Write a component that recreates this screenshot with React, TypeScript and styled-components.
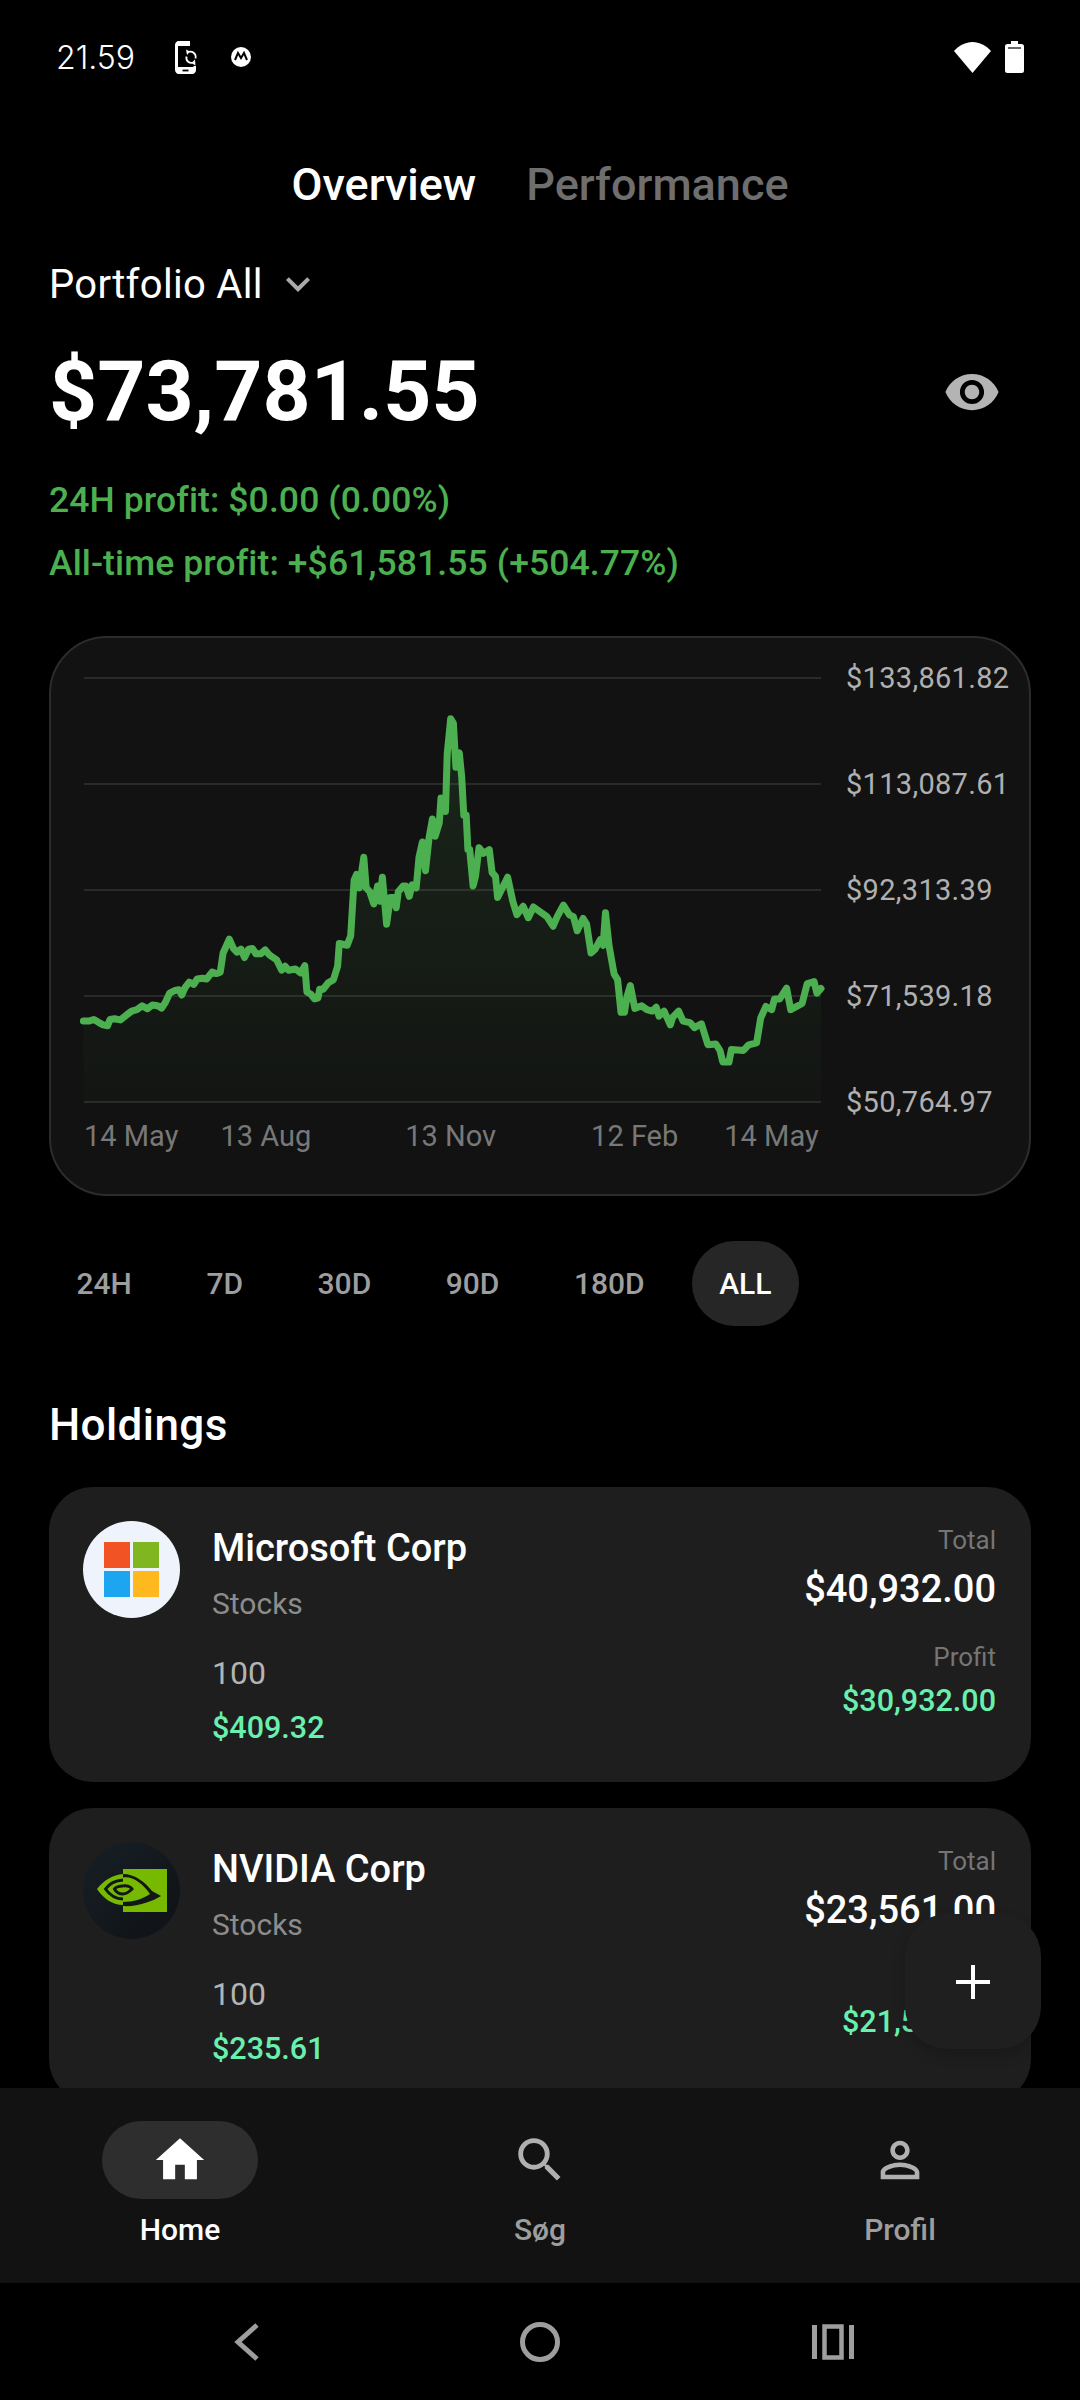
import styled, { createGlobalStyle } from "styled-components";
import {
  MdHome,
  MdKeyboardArrowDown,
  MdOutlinePersonOutline,
  MdSearch,
  MdVisibility,
} from "react-icons/md";

const GlobalStyle = createGlobalStyle`
  html, body {
    margin: 0;
    padding: 0;
    background: #000;
  }
  body {
    font-family: Roboto, "Noto Sans", sans-serif;
    color: #fff;
  }
`;

// line of the chart, traced from the screen: [x, y] in plot pixels
const LINE_LEFT =
  "155,1048 170,1048 185,1044 200,1052 212,1058 225,1060 232,1044 245,1042 262,1045 280,1032 295,1022 310,1018 325,1008 340,1016 355,1006 370,1008 382,1014 392,1000 405,975 420,968 432,966 440,980 450,960 462,946 475,952 485,938 500,936 512,938 528,920 540,924 552,920 560,870 570,850 578,834 590,858 600,868 612,860 622,882 634,860 645,858 655,872 670,872 682,862 695,876 715,888 730,915 740,905 750,915 770,912 785,922 797,903 803,972 815,978 825,990 835,988 840,965 850,965 865,948 880,940 892,905 897,845 910,848 920,850 930,825 940,680 947,665 955,700 968,620 975,700 985,710 997,742 1008,695 1015,735 1022,672 1034,795 1045,725 1055,725 1062,752 1068,710 1082,695 1090,695 1100,722 1108,692 1120,700 1128,620 1138,580 1147,655 1157,570 1167,520 1175,565 1187,530 1192,465 1205,500 1210,350 1220,258 1228,270 1235,385 1245,347 1252,410 1258,510 1265,510 1270,600 1275,600 1285,695 1292,670 1302,595 1315,610 1332,600 1340,660 1350,670 1356,725 1385,672 1400,735 1412,770 1430,748 1445,778 1460,750";
const LINE_RIGHT =
  "20,775 38,800 50,775 68,745 85,770 97,775 108,812 125,780 135,795 148,870 160,860 175,835 183,850 190,765 200,850 215,925 225,940 235,1025 245,1025 252,985 262,955 275,1015 295,1008 310,1018 325,1022 337,1012 345,1035 360,1022 378,1058 385,1038 402,1022 415,1048 435,1052 448,1065 468,1055 487,1110 510,1108 522,1125 530,1155 548,1155 555,1122 590,1125 605,1110 628,1105 640,1040 655,1010 672,1018 680,990 695,990 715,962 727,1018 760,1002 775,950 795,945 803,975 815,963";

const PLOT_W = 737;
const PLOT_H = 424;

const trace = (raw: string, originX: number) =>
  raw.split(" ").map((pair) => {
    const [x, y] = pair.split(",").map(Number);
    return `${(x / 2.9 + originX - 84).toFixed(1)},${(y / 2.613 + 620 - 678).toFixed(1)}`;
  });

const linePoints = [...trace(LINE_LEFT, 30), ...trace(LINE_RIGHT, 540)];
const areaPoints = [`0,${PLOT_H}`, ...linePoints, `${PLOT_W},${PLOT_H}`].join(" ");

const Page = styled.div`
  position: relative;
  width: 1080px;
  height: 2400px;
  background: #000;
  display: flex;
  flex-direction: column;
  overflow: hidden;
`;

// 상태바
const StatusBar = styled.div`
  height: 114px;
  flex: none;
  display: flex;
  align-items: center;
  padding: 0 56px;
`;

const StatusTime = styled.span`
  font-family: Inter, sans-serif;
  font-weight: 300;
  font-size: 32px;
  width: 119px;
`;

const StatusRight = styled.div`
  margin-left: auto;
  display: flex;
  align-items: center;
  gap: 14px;
`;

const Moto = styled.svg`
  margin-left: 33px;
`;

const Tabs = styled.div`
  flex: none;
  height: 60px;
  margin-top: 40px;
  display: flex;
  justify-content: center;
  align-items: center;
  gap: 50px;
`;

const Tab = styled.span<{ $active?: boolean }>`
  font-size: 45px;
  font-weight: 500;
  color: ${(p) => (p.$active ? "#fff" : "#6e6e6e")};
`;

const Content = styled.div`
  flex: 1;
  min-height: 0;
  overflow: hidden;
  padding: 0 49px;
`;

const PortfolioRow = styled.div`
  height: 50px;
  margin-top: 45px;
  display: flex;
  align-items: center;
  gap: 11px;
  font-size: 40px;
  letter-spacing: 0.3px;
  color: #fff;
  svg {
    color: #aaa;
  }
`;

const BalanceRow = styled.div`
  height: 94px;
  margin-top: 36px;
  display: flex;
  justify-content: space-between;
  align-items: center;
  padding-right: 30px;
  svg {
    color: #b4b4b4;
  }
`;

const Balance = styled.span`
  font-size: 84px;
  font-weight: 700;
  line-height: 94px;
`;

const ProfitList = styled.div`
  margin-top: 41px;
  display: flex;
  flex-direction: column;
  gap: 23px;
`;

const ProfitLine = styled.div`
  font-size: 35.5px;
  font-weight: 500;
  line-height: 40px;
  letter-spacing: 0.1px;
  color: #4caf50;
`;

// 차트 카드
const ChartCard = styled.div`
  margin-top: 53px;
  height: 560px;
  box-sizing: border-box;
  background: #121212;
  border: 2px solid #2c2c2c;
  border-radius: 58px;
  padding: 24px 0 0 33px;
  display: grid;
  grid-template-columns: ${PLOT_W}px auto;
  grid-template-rows: 456px auto;
  column-gap: 25px;
`;

const Plot = styled.svg`
  display: block;
  margin-top: 16px;
  overflow: visible;
`;

const YAxis = styled.div`
  display: flex;
  flex-direction: column;
  justify-content: space-between;
`;

const YLabel = styled.span`
  font-size: 29px;
  line-height: 32px;
  color: #b0b0b0;
  letter-spacing: 0.3px;
`;

const XAxis = styled.div`
  display: flex;
  margin-top: 2px;
`;

const XLabel = styled.span<{ $gap: number }>`
  font-size: 29px;
  line-height: 32px;
  white-space: nowrap;
  color: #787878;
  margin-left: ${(p) => p.$gap}px;
`;

const RangeRow = styled.div`
  margin-top: 45px;
  display: flex;
  gap: 19.5px;
`;

const RangePill = styled.div<{ $active?: boolean }>`
  height: 85px;
  padding: 0 27.5px;
  border-radius: 43px;
  display: flex;
  align-items: center;
  font-size: 30px;
  font-weight: 500;
  color: ${(p) => (p.$active ? "#fff" : "#9e9e9e")};
  background: ${(p) => (p.$active ? "#262626" : "transparent")};
`;

const SectionTitle = styled.h2`
  margin: 74px 0 37px;
  font-size: 44px;
  font-weight: 500;
  line-height: 50px;
  letter-spacing: 0.4px;
`;

const HoldingList = styled.div`
  display: flex;
  flex-direction: column;
  gap: 26px;
`;

const HoldingCard = styled.div`
  flex: none;
  height: 295px;
  box-sizing: border-box;
  background: #1e1e1e;
  border-radius: 44px;
  padding: 34px 35px 0 34px;
  display: flex;
`;

const LogoCircle = styled.div<{ $bg: string }>`
  flex: none;
  width: 97px;
  height: 97px;
  border-radius: 50%;
  background: ${(p) => p.$bg};
  display: flex;
  align-items: center;
  justify-content: center;
  margin-right: 32px;
`;

const MsGrid = styled.div`
  display: grid;
  grid-template-columns: 26px 26px;
  grid-auto-rows: 26px;
  gap: 3px;
`;

const MsSquare = styled.div<{ $color: string }>`
  background: ${(p) => p.$color};
`;

const HoldingLeft = styled.div`
  flex: 1;
  padding-top: 5px;
  display: flex;
  flex-direction: column;
`;

const HoldingName = styled.div`
  font-size: 38px;
  font-weight: 500;
  line-height: 44px;
`;

const HoldingType = styled.div`
  margin-top: 16px;
  font-size: 30px;
  line-height: 36px;
  color: #8c8c8c;
`;

const HoldingQty = styled.div`
  margin-top: 32px;
  font-size: 32px;
  line-height: 38px;
  color: #b4b4b4;
`;

const HoldingPrice = styled.div`
  margin-top: 18px;
  font-size: 30.5px;
  font-weight: 500;
  line-height: 36px;
  color: #69f0ae;
`;

const HoldingRight = styled.div`
  padding-top: 4px;
  display: flex;
  flex-direction: column;
  align-items: flex-end;
`;

const StatLabel = styled.div<{ $gap?: number }>`
  margin-top: ${(p) => p.$gap ?? 0}px;
  font-size: 26px;
  line-height: 30px;
  color: #757575;
`;

const StatTotal = styled.div`
  margin-top: 12px;
  font-size: 38px;
  font-weight: 500;
  line-height: 44px;
`;

const StatProfit = styled.div`
  margin-top: 11px;
  font-size: 30.5px;
  font-weight: 500;
  line-height: 36px;
  color: #69f0ae;
`;

const Fab = styled.div`
  position: absolute;
  left: 905px;
  top: 1914px;
  width: 136px;
  height: 135px;
  border-radius: 42px;
  background: #1f1f1f;
  box-shadow: 0 6px 14px rgba(0, 0, 0, 0.18);
  display: flex;
  align-items: center;
  justify-content: center;
`;

// 하단 내비게이션
const BottomNav = styled.nav`
  flex: none;
  height: 195px;
  background: #121212;
  display: grid;
  grid-template-columns: repeat(3, 360px);
`;

const NavItem = styled.div<{ $active?: boolean }>`
  display: flex;
  flex-direction: column;
  align-items: center;
  padding-top: 33px;
  color: ${(p) => (p.$active ? "#fff" : "#b0b0b0")};
`;

const NavIcon = styled.div<{ $active?: boolean }>`
  width: 156px;
  height: 78px;
  border-radius: 39px;
  display: flex;
  align-items: center;
  justify-content: center;
  background: ${(p) => (p.$active ? "#2e2e2e" : "transparent")};
`;

const NavLabel = styled.span<{ $active?: boolean }>`
  margin-top: 14px;
  font-size: 30px;
  font-weight: 500;
  line-height: 34px;
  color: ${(p) => (p.$active ? "#fff" : "#9e9e9e")};
`;

const SystemNav = styled.div`
  flex: none;
  height: 117px;
  padding: 0 101px;
  display: grid;
  grid-template-columns: repeat(3, 1fr);
  align-items: center;
  justify-items: center;
`;

const PhoneSyncIcon = () => (
  <svg width="23" height="33" viewBox="0 0 23 33" fill="none">
    <path
      d="M15 0H4.500A4 4 0 0 0 0 4V29A4 4 0 0 0 4.500 33H16.500A4 4 0 0 0 21 29V25H18.500V26H3V5H15Z"
      fill="#fff"
    />
    <path d="M7.500 29.500H13.500" stroke="#000" strokeWidth="1.800" />
    <path
      d="M13 11C17 9.500 21.500 12.500 20.500 17.500M18.500 21.500C14.500 23 10.500 20 11.500 15.500"
      stroke="#fff"
      strokeWidth="1.800"
    />
    <path d="M11 8.500L15 10.500L12 14Z M20.500 24.500L16.500 22L20 18.500Z" fill="#fff" />
  </svg>
);

const WifiIcon = () => (
  <svg width="37" height="31" viewBox="0 0 37 31">
    <path d="M18.500 31L0 9C5 3.500 11.500 0 18.500 0S32 3.500 37 9Z" fill="#fff" />
  </svg>
);

const BatteryIcon = () => (
  <svg width="19" height="32" viewBox="0 0 19 32">
    <path
      d="M6 0H13V3H16.500A2.500 2.500 0 0 1 19 5.500V29.500A2.500 2.500 0 0 1 16.500 32H2.500A2.500 2.500 0 0 1 0 29.500V5.500A2.500 2.500 0 0 1 2.500 3H6Z"
      fill="#fff"
    />
    <rect x="3" y="6" width="13" height="2" fill="#666" />
  </svg>
);

const MsLogo = () => (
  <LogoCircle $bg="#eff3fb">
    <MsGrid>
      <MsSquare $color="#f25325" />
      <MsSquare $color="#80b61f" />
      <MsSquare $color="#1ba6ef" />
      <MsSquare $color="#ffb91f" />
    </MsGrid>
  </LogoCircle>
);

const NvidiaLogo = () => (
  <LogoCircle $bg="linear-gradient(135deg, #172026, #0f1114)">
    <svg width="97" height="97" viewBox="0 0 97 97" fill="none">
      <rect x="40" y="27" width="44" height="43" fill="#76b900" />
      <path d="M14 47C21 38 30 33 40 32V63C29 63 20 56 14 47Z" fill="#76b900" />
      <g stroke="#12171a" strokeWidth="3">
        <path d="M40 38C32 38.500 26 42 22.500 47C26 52 32 57 40 57" />
        <path d="M40 44C36 44 33 45 31.500 47C33 50 36 52 40 52" />
        <path d="M40 44C44 43 48 45 49 47C46 50 43 52 40 52" />
      </g>
      <path d="M40 32C52 32 62 40 69 49L78 54C68 60 54 65 40 64V60C50 60 60 57 67 52C60 42 50 34 40 35.500Z" fill="#12171a" />
    </svg>
  </LogoCircle>
);

interface HoldingProps {
  name: string;
  price: string;
  total: string;
  profit: string;
  logo: React.ReactNode;
}

const Holding = ({ name, price, total, profit, logo }: HoldingProps) => (
  <HoldingCard>
    {logo}
    <HoldingLeft>
      <HoldingName>{name}</HoldingName>
      <HoldingType>Stocks</HoldingType>
      <HoldingQty>100</HoldingQty>
      <HoldingPrice>{price}</HoldingPrice>
    </HoldingLeft>
    <HoldingRight>
      <StatLabel>Total</StatLabel>
      <StatTotal>{total}</StatTotal>
      <StatLabel $gap={31}>Profit</StatLabel>
      <StatProfit>{profit}</StatProfit>
    </HoldingRight>
  </HoldingCard>
);

const Y_LABELS = ["$133,861.82", "$113,087.61", "$92,313.39", "$71,539.18", "$50,764.97"];
const X_LABELS: [string, number][] = [
  ["14 May", 0],
  ["13 Aug", 42],
  ["13 Nov", 94],
  ["12 Feb", 95],
  ["14 May", 46],
];
const RANGES = ["24H", "7D", "30D", "90D", "180D", "ALL"];

export default function App() {
  return (
    <>
      <GlobalStyle />
      <Page>
        <StatusBar>
          <StatusTime>21.59</StatusTime>
          <PhoneSyncIcon />
          <Moto width="20" height="20" viewBox="0 0 20 20">
            <circle cx="10" cy="10" r="10" fill="#fff" />
            <path d="M4 13L7 6L10 11L13 6L16 13" fill="none" stroke="#000" strokeWidth="2" />
          </Moto>
          <StatusRight>
            <WifiIcon />
            <BatteryIcon />
          </StatusRight>
        </StatusBar>

        <Tabs>
          <Tab $active>Overview</Tab>
          <Tab>Performance</Tab>
        </Tabs>

        <Content>
          <PortfolioRow>
            Portfolio All
            <MdKeyboardArrowDown size={48} />
          </PortfolioRow>
          <BalanceRow>
            <Balance>$73,781.55</Balance>
            <MdVisibility size={58} />
          </BalanceRow>
          <ProfitList>
            <ProfitLine>24H profit: $0.00 (0.00%)</ProfitLine>
            <ProfitLine>All-time profit: +$61,581.55 (+504.77%)</ProfitLine>
          </ProfitList>

          <ChartCard>
            <Plot width={PLOT_W} height={PLOT_H} viewBox={`0 0 ${PLOT_W} ${PLOT_H}`}>
              <defs>
                <linearGradient id="area" x1="0" y1="0" x2="0" y2="1">
                  <stop offset="0%" stopColor="#4caf50" stopOpacity="0.13" />
                  <stop offset="100%" stopColor="#4caf50" stopOpacity="0.02" />
                </linearGradient>
              </defs>
              {[0, 1, 2, 3, 4].map((i) => (
                <line
                  key={i}
                  x1="0"
                  x2={PLOT_W}
                  y1={(i * PLOT_H) / 4}
                  y2={(i * PLOT_H) / 4}
                  stroke="#2a2a2a"
                  strokeWidth="2"
                />
              ))}
              <polygon points={areaPoints} fill="url(#area)" />
              <polyline
                points={linePoints.join(" ")}
                fill="none"
                stroke="#4caf50"
                strokeWidth="7"
                strokeLinejoin="round"
                strokeLinecap="round"
              />
            </Plot>
            <YAxis>
              {Y_LABELS.map((label) => (
                <YLabel key={label}>{label}</YLabel>
              ))}
            </YAxis>
            <XAxis>
              {X_LABELS.map(([label, gap]) => (
                <XLabel key={label + gap} $gap={gap}>
                  {label}
                </XLabel>
              ))}
            </XAxis>
          </ChartCard>

          <RangeRow>
            {RANGES.map((range) => (
              <RangePill key={range} $active={range === "ALL"}>
                {range}
              </RangePill>
            ))}
          </RangeRow>

          <SectionTitle>Holdings</SectionTitle>
          <HoldingList>
            <Holding
              name="Microsoft Corp"
              price="$409.32"
              total="$40,932.00"
              profit="$30,932.00"
              logo={<MsLogo />}
            />
            <Holding
              name="NVIDIA Corp"
              price="$235.61"
              total="$23,561.00"
              profit="$21,561.00"
              logo={<NvidiaLogo />}
            />
          </HoldingList>
        </Content>

        <Fab>
          <svg width="34" height="34" viewBox="0 0 34 34" stroke="#fff" strokeWidth="4">
            <path d="M17 0V34M0 17H34" />
          </svg>
        </Fab>

        <BottomNav>
          <NavItem $active>
            <NavIcon $active>
              <MdHome size={58} />
            </NavIcon>
            <NavLabel $active>Home</NavLabel>
          </NavItem>
          <NavItem>
            <NavIcon>
              <MdSearch size={58} />
            </NavIcon>
            <NavLabel>Søg</NavLabel>
          </NavItem>
          <NavItem>
            <NavIcon>
              <MdOutlinePersonOutline size={58} />
            </NavIcon>
            <NavLabel>Profil</NavLabel>
          </NavItem>
        </BottomNav>

        <SystemNav>
          <svg width="26" height="38" viewBox="0 0 26 38" fill="none" stroke="#9e9e9e" strokeWidth="5">
            <path d="M23 2L4 19L23 36" />
          </svg>
          <svg width="42" height="42" viewBox="0 0 42 42" fill="none" stroke="#9e9e9e" strokeWidth="5">
            <circle cx="21" cy="21" r="17.500" />
          </svg>
          <svg width="42" height="36" viewBox="0 0 42 36" fill="none" stroke="#9e9e9e" strokeWidth="5">
            <path d="M2.500 1V35M39.500 1V35" />
            <rect x="12.500" y="2.500" width="17" height="31" strokeWidth="4.500" />
          </svg>
        </SystemNav>
      </Page>
    </>
  );
}
